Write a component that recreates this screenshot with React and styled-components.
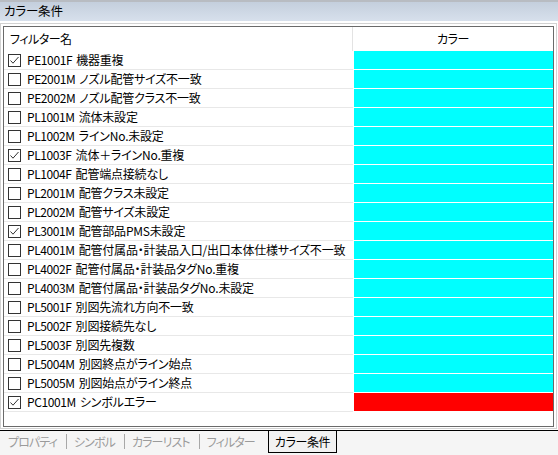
import React from "react";
import styled, { createGlobalStyle } from "styled-components";

const GlobalStyle = createGlobalStyle`
  html, body { margin: 0; padding: 0; background: #ffffff; }
  body {
    width: 558px;
    height: 455px;
    overflow: hidden;
    font-family: "Noto Sans CJK JP", "Noto Sans", sans-serif;
    font-size: 12px;
    color: #000;
  }
  * { box-sizing: border-box; }
`;

const Page = styled.div`
  display: flex;
  flex-direction: column;
  width: 558px;
  height: 455px;
`;

const TitleBar = styled.div`
  height: 21px;
  margin-bottom: 2px;
  border-top: 2px solid #b8bcc2;
  background: linear-gradient(#c4cfdd, #d7e0ec);
  display: flex;
  align-items: center;
  padding-left: 4px;
  font-size: 12.5px;
  letter-spacing: -0.2px;
  font-feature-settings: "palt";
  line-height: 1;
`;

const Panel = styled.div`
  width: 557px;
  border: 1px solid #d2d2d2;
  padding: 2px 2px 1px 2px;
  background: #fff;
`;

const Grid = styled.div`
  height: 401px;
  border: 1px solid #6a6a6a;
  background: #fff;
  display: grid;
  grid-template-columns: 349px 200px;
  grid-auto-rows: max-content;
  align-content: start;
  overflow: hidden;
`;

const HeaderCell = styled.div`
  height: 24px;
  display: flex;
  align-items: center;
  justify-content: ${(p) => (p.$center ? "center" : "flex-start")};
  padding-left: ${(p) => (p.$center ? "0" : "6px")};
  border-right: ${(p) => (p.$divider ? "1px solid #e3e3e3" : "none")};
  font-size: 12px;
  letter-spacing: -0.5px;
  font-feature-settings: "palt";
  line-height: 1;
`;

const NameCell = styled.div`
  height: 19px;
  border-bottom: 1px solid #e8e8e8;
  display: flex;
  align-items: center;
  padding-left: 4px;
  gap: 6px;
  white-space: nowrap;
  overflow: hidden;
  line-height: 1;
`;

const ColorCell = styled.div`
  height: 19px;
  padding: 0 0 1px 1px;
`;

const Swatch = styled.div`
  height: 18px;
  background: ${(p) => p.$color};
`;

const Box = styled.span`
  flex: none;
  width: 13px;
  height: 13px;
  border: 1px solid #333;
  background: #fff;
  display: flex;
  align-items: center;
  justify-content: center;
`;

const Label = styled.span`
  font-size: 12px;
  letter-spacing: -0.2px;
  font-feature-settings: "palt";
`;

const Code = styled.span`
  font-size: 12px;
  letter-spacing: -0.4px;
  margin-right: 4px;
`;

const Filler = styled.div`
  grid-column: 1 / span 2;
`;

const TabStrip = styled.div`
  flex: 1;
  margin-top: 1px;
  border-top: 1px solid #000;
  background: #f5f5f5;
  display: flex;
  align-items: flex-start;
  padding-left: 2px;
`;

const Tab = styled.div`
  height: ${(p) => (p.$active ? "22px" : "18px")};
  padding: ${(p) => (p.$active ? "0 6px" : "0 8px 0 6px")};
  display: flex;
  align-items: center;
  font-size: 12px;
  letter-spacing: ${(p) => (p.$active ? "-0.4px" : "-0.9px")};
  font-feature-settings: "palt";
  line-height: 1;
  color: ${(p) => (p.$active ? "#000" : "#9b9b9b")};
  background: ${(p) => (p.$active ? "#f2f2f2" : "transparent")};
  border: ${(p) => (p.$active ? "1px solid #000" : "none")};
  border-top: none;
  margin-left: ${(p) => (p.$active ? "5px" : "0")};
  margin-top: ${(p) => (p.$active ? "0" : "2px")};
`;

const Sep = styled.span`
  width: 1px;
  height: 15px;
  margin: 3px 1px 0;
  background: #a8a8a8;
`;

const Check = () => (
  <svg width="11" height="11" viewBox="0 0 11 11">
    <polyline points="1.5,5.5 4,8.2 9.5,2" fill="none" stroke="#333" strokeWidth="1" />
  </svg>
);

const rows = [
  ["PE1001F", "機器重複", true, "#00ffff"],
  ["PE2001M", "ノズル配管サイズ不一致", false, "#00ffff"],
  ["PE2002M", "ノズル配管クラス不一致", false, "#00ffff"],
  ["PL1001M", "流体未設定", false, "#00ffff"],
  ["PL1002M", "ラインNo.未設定", false, "#00ffff"],
  ["PL1003F", "流体＋ラインNo.重複", true, "#00ffff"],
  ["PL1004F", "配管端点接続なし", false, "#00ffff"],
  ["PL2001M", "配管クラス未設定", false, "#00ffff"],
  ["PL2002M", "配管サイズ未設定", false, "#00ffff"],
  ["PL3001M", "配管部品PMS未設定", true, "#00ffff"],
  ["PL4001M", "配管付属品・計装品入口/出口本体仕様サイズ不一致", false, "#00ffff"],
  ["PL4002F", "配管付属品・計装品タグNo.重複", false, "#00ffff"],
  ["PL4003M", "配管付属品・計装品タグNo.未設定", false, "#00ffff"],
  ["PL5001F", "別図先流れ方向不一致", false, "#00ffff"],
  ["PL5002F", "別図接続先なし", false, "#00ffff"],
  ["PL5003F", "別図先複数", false, "#00ffff"],
  ["PL5004M", "別図終点がライン始点", false, "#00ffff"],
  ["PL5005M", "別図始点がライン終点", false, "#00ffff"],
  ["PC1001M", "シンボルエラー", true, "#ff0000"],
];

const tabs = ["プロパティ", "シンボル", "カラーリスト", "フィルター"];

export default function App() {
  return (
    <Page>
      <GlobalStyle />
      <TitleBar>カラー条件</TitleBar>
      <Panel>
        <Grid>
          <HeaderCell $divider>フィルター名</HeaderCell>
          <HeaderCell $center>カラー</HeaderCell>
          {rows.map(([code, name, checked, color]) => (
            <React.Fragment key={code}>
              <NameCell>
                <Box>{checked && <Check />}</Box>
                <Label>
                  <Code>{code}</Code>
                  {name}
                </Label>
              </NameCell>
              <ColorCell>
                <Swatch $color={color} />
              </ColorCell>
            </React.Fragment>
          ))}
          <Filler />
        </Grid>
      </Panel>
      <TabStrip>
        {tabs.map((t, i) => (
          <React.Fragment key={t}>
            {i > 0 && <Sep />}
            <Tab>{t}</Tab>
          </React.Fragment>
        ))}
        <Tab $active>カラー条件</Tab>
      </TabStrip>
    </Page>
  );
}
